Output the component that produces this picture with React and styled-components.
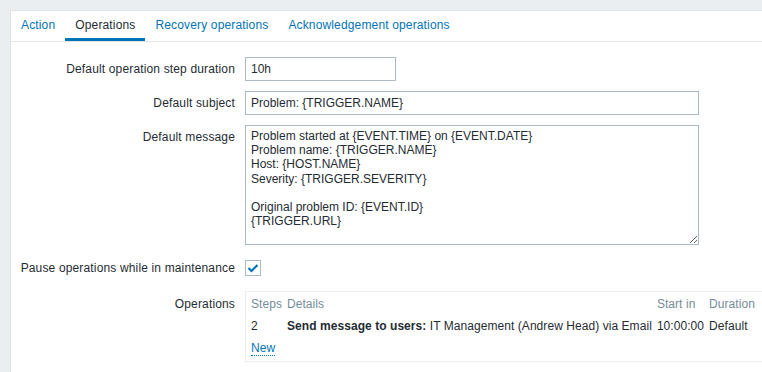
import React from 'react';
import styled, { createGlobalStyle } from 'styled-components';

const GlobalStyle = createGlobalStyle`
  html, body {
    margin: 0;
    padding: 0;
    background: #ebeef0;
    overflow: hidden;
  }
  body {
    font-family: "Liberation Sans", Arial, sans-serif;
    font-size: 12px;
    letter-spacing: 0.15px;
    color: #1f2c33;
  }
`;

const Page = styled.div`
  padding: 10px 0 0 10px;
`;

const Panel = styled.div`
  width: 800px;
  min-height: 400px;
  background: #fff;
  border: 1px solid #dfe4e7;
  border-right: none;
  border-bottom: none;
  box-sizing: border-box;
`;

const TabBar = styled.ul`
  display: flex;
  list-style: none;
  margin: 0;
  padding: 0;
  height: 30px;
  border-bottom: 1px solid #dfe4e7;
`;

const Tab = styled.li`
  padding: 0 10px;
  line-height: 28px;
  height: 27px;
  color: ${(p) => (p.$active ? '#1f2c33' : '#0275b8')};
  border-bottom: 3px solid ${(p) => (p.$active ? '#0275b8' : 'transparent')};
  cursor: pointer;
`;

const Form = styled.div`
  display: grid;
  grid-template-columns: 215px 1fr;
  column-gap: 10px;
  row-gap: 10px;
  padding: 15px 0 0 9px;
`;

const Label = styled.label`
  text-align: right;
  line-height: ${(p) => p.$lh || 24}px;
  white-space: nowrap;
`;

const Field = styled.div`
  display: flex;
  align-items: ${(p) => (p.$center ? 'center' : 'flex-start')};
  min-height: ${(p) => p.$h || 24}px;
`;

const TextInput = styled.input`
  box-sizing: border-box;
  width: ${(p) => p.$width}px;
  height: 24px;
  border: 1px solid #acbbc2;
  padding: 0 5px;
  font: inherit;
  letter-spacing: 0;
  color: #1f2c33;
  outline: none;
`;

const TextArea = styled.textarea`
  box-sizing: border-box;
  width: 454px;
  height: 120px;
  border: 1px solid #acbbc2;
  padding: 3px 5px;
  font: inherit;
  letter-spacing: 0;
  line-height: 14.2px;
  color: #1f2c33;
  outline: none;
  resize: both;
  margin: 0;
`;

const CheckBox = styled.span`
  display: inline-flex;
  align-items: center;
  justify-content: center;
  box-sizing: border-box;
  width: 16px;
  height: 16px;
  border: 1px solid #acbbc2;
  background: #fff;
`;

const OpsBox = styled.div`
  width: 560px;
  border: 1px solid #ebeef0;
  border-right: none;
  padding: 1px 5px 2px;
`;

const Table = styled.table`
  border-collapse: collapse;
  letter-spacing: 0.06px;
`;

const Th = styled.th`
  font-weight: normal;
  text-align: left;
  color: #768d99;
  height: 22px;
  padding: 0 5px 0 0;
  white-space: nowrap;
`;

const Td = styled.td`
  height: 22px;
  padding: 0 5px 0 0;
  white-space: nowrap;
`;

const Link = styled.a`
  color: #0275b8;
  text-decoration: none;
  border-bottom: 1px dotted #0275b8;
  cursor: pointer;
`;

const tabs = ['Action', 'Operations', 'Recovery operations', 'Acknowledgement operations'];

const message = `Problem started at {EVENT.TIME} on {EVENT.DATE}
Problem name: {TRIGGER.NAME}
Host: {HOST.NAME}
Severity: {TRIGGER.SEVERITY}

Original problem ID: {EVENT.ID}
{TRIGGER.URL}`;

const App = () => (
  <Page>
    <GlobalStyle />
    <Panel>
      <TabBar>
        {tabs.map((t) => (
          <Tab key={t} $active={t === 'Operations'}>{t}</Tab>
        ))}
      </TabBar>
      <Form>
        <Label>Default operation step duration</Label>
        <Field>
          <TextInput $width={151} defaultValue="10h" />
        </Field>

        <Label>Default subject</Label>
        <Field>
          <TextInput $width={454} defaultValue="Problem: {TRIGGER.NAME}" />
        </Field>

        <Label>Default message</Label>
        <Field>
          <TextArea readOnly value={message} />
        </Field>

        <Label $lh={26}>Pause operations while in maintenance</Label>
        <Field $center $h={26}>
          <CheckBox>
            <svg width="12" height="10" viewBox="0 0 12 10">
              <path d="M1.5 5 L4.5 8 L10.5 2" fill="none" stroke="#0275b8" strokeWidth="2.2" />
            </svg>
          </CheckBox>
        </Field>

        <Label $lh={27}>Operations</Label>
        <OpsBox>
          <Table>
            <thead>
              <tr>
                <Th>Steps</Th>
                <Th>Details</Th>
                <Th>Start in</Th>
                <Th>Duration</Th>
              </tr>
            </thead>
            <tbody>
              <tr>
                <Td>2</Td>
                <Td>
                  <b>Send message to users:</b> IT Management (Andrew Head) via Email
                </Td>
                <Td>10:00:00</Td>
                <Td>Default</Td>
              </tr>
              <tr>
                <Td colSpan={4}>
                  <Link>New</Link>
                </Td>
              </tr>
            </tbody>
          </Table>
        </OpsBox>
      </Form>
    </Panel>
  </Page>
);

export default App;
